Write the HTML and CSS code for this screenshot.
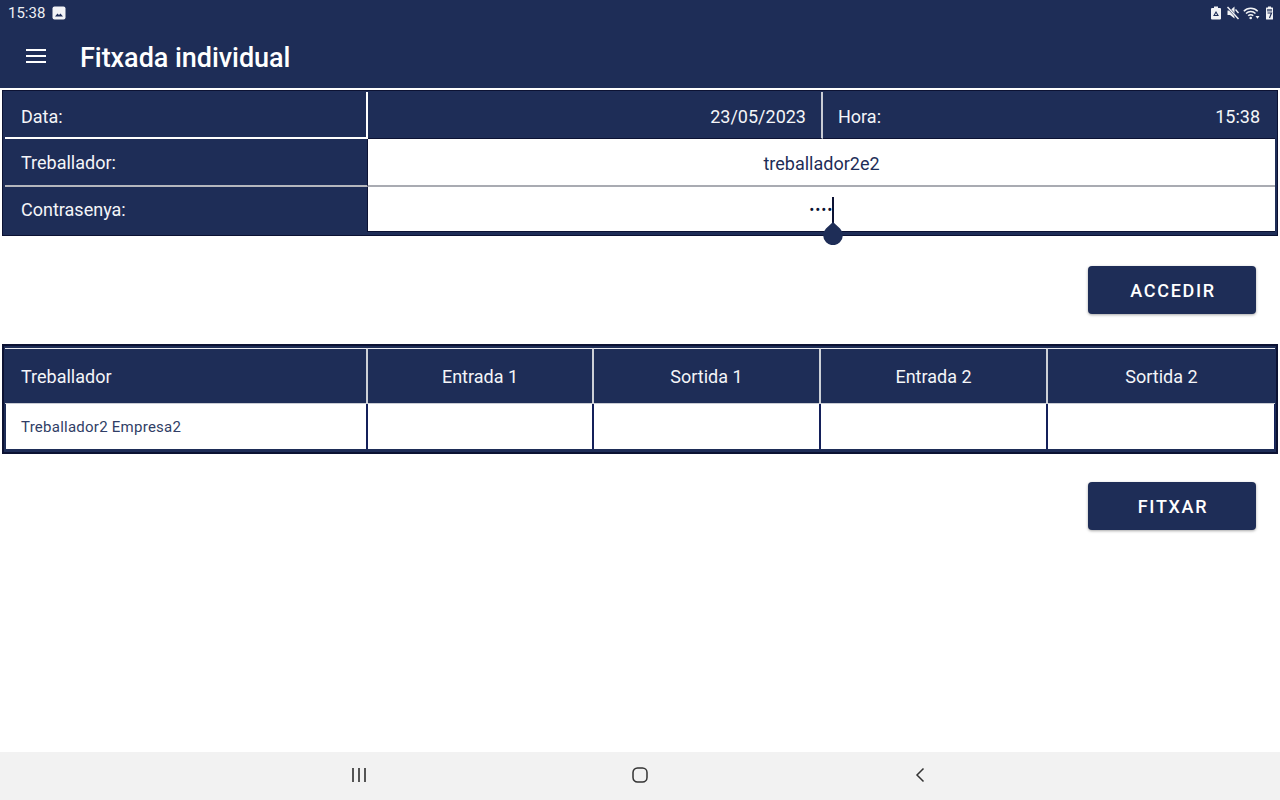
FILE: index.html
```html
<!DOCTYPE html>
<html lang="ca">
<head>
<meta charset="utf-8">
<title>Fitxada individual</title>
<link rel="stylesheet" href="styles.css">
</head>
<body>
<div class="screen">
  <header class="top">
    <div class="status">
      <div class="status-left">
        <span class="clock">15:38</span>
        <svg class="pic" width="14" height="14" viewBox="0 0 14 14"><rect x="0.5" y="0.5" width="13" height="13" rx="2" fill="#f2f3f6"/><path d="M3 10.500 5.500 7.500 7 9 8.500 7.500 11 10.500Z" fill="#1e2d57"/></svg>
      </div>
      <div class="status-right">
        <svg width="10" height="14" viewBox="0 0 10 14"><path d="M3 0.500h4V2h2a1 1 0 0 1 1 1v9.500a1 1 0 0 1-1 1H1a1 1 0 0 1-1-1V3a1 1 0 0 1 1-1h2Z" fill="#f2f3f6"/><path d="M3 9.500 5 6l2 3.500Z" fill="none" stroke="#1e2d57" stroke-width="1.100"/></svg>
        <svg class="mute" width="12" height="14" viewBox="0 0 12 14"><path d="M0.500 4.500h2.500L7.500 0.500v12L3 9H0.500Z" fill="#f2f3f6"/><path d="M0.500 1 11.500 13" stroke="#1e2d57" stroke-width="2.500"/><path d="M0.500 1 11.500 13" stroke="#f2f3f6" stroke-width="1.500"/><path d="M8.500 3.500 11.500 7" stroke="#f2f3f6" stroke-width="1.300"/></svg>
        <svg class="wifi" width="17" height="14" viewBox="0 0 17 14"><path d="M0.800 5.200a9.800 9.800 0 0 1 13.900 0M3 7.500a6.700 6.700 0 0 1 9.500 0M5.200 9.800a3.500 3.500 0 0 1 5 0" fill="none" stroke="#f2f3f6" stroke-width="1.500"/><circle cx="7.700" cy="12" r="1.300" fill="#f2f3f6"/><path d="M12.500 10h4l-2 2.800Z" fill="#f2f3f6"/></svg>
        <svg class="bat" width="7" height="14" viewBox="0 0 7 14"><path d="M2 0.500h3V1.500h1.500a.5.5 0 0 1 .5.500v11a.5.5 0 0 1-.5.500H.5a.5.5 0 0 1-.5-.500V2a.5.5 0 0 1 .5-.500H2Z" fill="#f2f3f6"/><path d="M1 3h5v2.500H1Z" fill="#66708c"/><path d="M1.500 7h4L3.500 12" fill="none" stroke="#1e2d57" stroke-width="1.200"/></svg>
      </div>
    </div>
    <div class="appbar">
      <svg class="menu" width="20" height="14" viewBox="0 0 20 14"><path d="M0 0h20v2H0ZM0 6h20v2H0ZM0 12h20v2H0Z" fill="#fff"/></svg>
      <h1 class="title">Fitxada individual</h1>
    </div>
  </header>

  <main class="content">
    <section class="form">
      <div class="row row-1">
        <div class="label l-date">Data:</div>
        <div class="cell-date">23/05/2023</div>
        <div class="cell-hour"><span>Hora:</span><span>15:38</span></div>
      </div>
      <div class="row row-2">
        <div class="label l-worker">Treballador:</div>
        <div class="field f-worker">treballador2e2</div>
      </div>
      <div class="row row-3">
        <div class="label l-pass">Contrasenya:</div>
        <div class="field f-pass"><span class="dots">••••</span><span class="caret"></span>
          <svg class="handle" width="20" height="23" viewBox="0 0 20 23"><path d="M10 0 17 6.500A9.800 9.800 0 1 1 3 6.500Z" fill="#1e2d57"/></svg>
        </div>
      </div>
    </section>

    <div class="actions"><button class="btn">ACCEDIR</button></div>

    <section class="table">
      <div class="th first">Treballador</div>
      <div class="th">Entrada 1</div>
      <div class="th">Sortida 1</div>
      <div class="th">Entrada 2</div>
      <div class="th last">Sortida 2</div>
      <div class="td name">Treballador2 Empresa2</div>
      <div class="td"></div>
      <div class="td"></div>
      <div class="td"></div>
      <div class="td last"></div>
    </section>

    <div class="actions second"><button class="btn">FITXAR</button></div>
  </main>

  <nav class="navbar">
    <svg width="14" height="14" viewBox="0 0 14 14"><path d="M1 0v14M7 0v14M13 0v14" stroke="#222" stroke-width="1.500" fill="none"/></svg>
    <svg width="16" height="16" viewBox="0 0 16 16"><rect x="1" y="1" width="14" height="14" rx="4.500" fill="none" stroke="#333" stroke-width="1.500"/></svg>
    <svg class="back" width="10" height="16" viewBox="0 0 10 16"><path d="M8.500 1.500 2 8l6.500 6.500" fill="none" stroke="#333" stroke-width="1.500"/></svg>
  </nav>
</div>
</body>
</html>
```
FILE: styles.css
```css
* { box-sizing: border-box; }
html, body { margin: 0; padding: 0; background: #fff; }
.screen {
  width: 1280px;
  height: 800px;
  display: flex;
  flex-direction: column;
  font-family: Roboto, "Liberation Sans", sans-serif;
  overflow: hidden;
}
.top { height: 88px; background: #1e2d57; color: #fff; flex: none; }
.status {
  height: 24px;
  padding: 1px 7px 0 8px;
  display: flex;
  align-items: center;
  justify-content: space-between;
  color: #eef0f4;
}
.status-left, .status-right { display: flex; align-items: center; }
.status-left { gap: 7px; }
.mute { margin-left: 6px; }
.wifi { margin-left: 4px; }
.bat { margin-left: 6px; }
.clock { font-size: 15px; }
.appbar { height: 64px; display: flex; align-items: center; padding-left: 26px; }
.menu { flex: none; }
.title { margin: 4px 0 0 34px; font-size: 27px; font-weight: 500; line-height: 32px; letter-spacing: -.05px; }

.content { flex: 1; padding-top: 2px; }

.form {
  margin: 0 2px;
  height: 146px;
  border: 1px solid #0c1233;
  background: #1e2d57;
  padding: 1px 2px 3px 2px;
  font-size: 18px;
  color: #f4f5f8;
  display: flex;
  flex-direction: column;
}
.row { display: flex; }
.row-1 { height: 47px; }
.row-2 { height: 48px; }
.row-3 { height: 45px; }
.label {
  flex: none;
  width: 363px;
  display: flex;
  align-items: center;
  padding-left: 16px;
  padding-top: 1px;
}
.l-date { border-right: 2px solid #fff; border-bottom: 2px solid #fff; padding-top: 3px; }
.l-worker { border-right: 1px solid #0c1233; border-bottom: 2px solid #b4b6bd; }
.l-pass { border-right: 1px solid #0c1233; padding-top: 0; }
.cell-date {
  flex: none;
  width: 455px;
  display: flex;
  align-items: center;
  justify-content: flex-end;
  padding: 3px 15px 0 0;
  border-right: 2px solid #c9ccd4;
  border-bottom: 1px solid #0c1233;
}
.cell-hour {
  flex: 1;
  display: flex;
  align-items: center;
  justify-content: space-between;
  padding: 3px 15px 0 15px;
  border-bottom: 1px solid #0c1233;
}
.field {
  flex: 1;
  background: #fff;
  color: #1e2d57;
  display: flex;
  align-items: center;
  justify-content: center;
  position: relative;
}
.f-worker { border-bottom: 2px solid #a9abb2; padding-top: 2px; }
.f-pass { border-bottom: 1px solid #0c1233; }
.dots { font-size: 12px; font-weight: 900; letter-spacing: 1.5px; color: #0c1233; padding-top: 2px; }
.caret { position: absolute; left: 464px; top: 10px; width: 2px; height: 26px; background: #0c1233; }
.handle { position: absolute; left: 455px; top: 35px; }

.actions { display: flex; justify-content: flex-end; padding: 30px 24px 30px 0; }
.actions.second { padding-top: 28px; }
.btn {
  width: 168px;
  height: 48px;
  border: 0;
  border-radius: 4px;
  background: #1e2d57;
  color: #fff;
  font-family: inherit;
  font-size: 18px;
  font-weight: 500;
  letter-spacing: 1.7px;
  padding: 0 0 0 2px;
  box-shadow: 0 1px 3px rgba(0, 0, 0, .35);
}

.table {
  margin: 0 2px;
  height: 110px;
  border: 2px solid #0c1233;
  background: #1e2d57;
  padding: 2px 1px 3px 1px;
  display: grid;
  grid-template-columns: 363px 226px 227px 227px 227px;
  grid-template-rows: 56px 45px;
  font-size: 18px;
  color: #f4f5f8;
}
.th {
  border-top: 1px solid #e8e9ee;
  border-right: 2px solid #cdd0d7;
  border-bottom: 1px solid #c9ccd4;
  display: flex;
  align-items: center;
  justify-content: center;
}
.th.first { justify-content: flex-start; padding-left: 16px; }
.th.last { border-right: 0; }
.td {
  background: #fff;
  border-right: 2px solid #14205a;
  color: #1e2d57;
  display: flex;
  align-items: center;
}
.td.name {
  font-size: 15px;
  letter-spacing: .25px;
  padding: 1px 0 0 15px;
  margin-left: 1px;
  color: #303e66;
}
.td.last { border-right: 1px solid #14205a; }

.navbar {
  height: 48px;
  flex: none;
  background: #f2f2f2;
  display: flex;
  align-items: center;
  padding: 0 0 2px 352px;
  gap: 266px;
}
.back { margin-left: 1px; }
```
